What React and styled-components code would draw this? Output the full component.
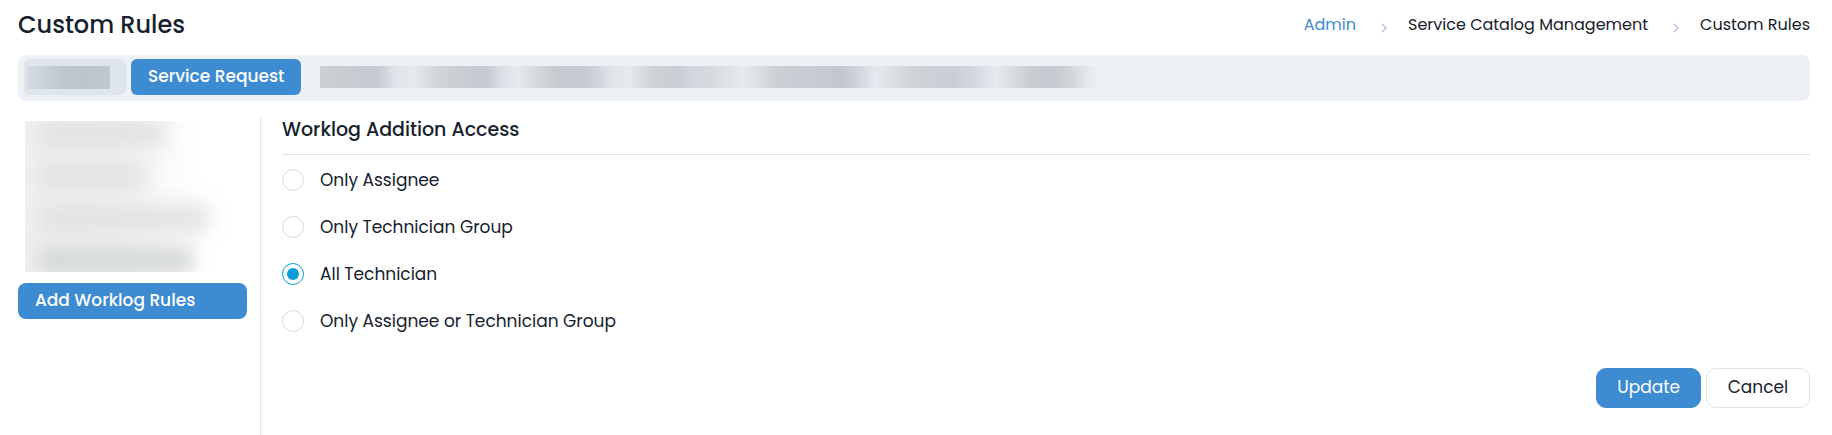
import { useState } from 'react';
import styled, { createGlobalStyle, css } from 'styled-components';

const GlobalStyle = createGlobalStyle`
  *, *::before, *::after {
    box-sizing: border-box;
  }

  body {
    margin: 0;
    background: #fff;
    color: #16212c;
    font-family: Poppins, Inter, sans-serif;
    font-size: 17px;
    line-height: 24px;
  }
`;

const Page = styled.div`
  min-height: 100vh;
  display: flex;
  flex-direction: column;
  padding: 0 22px 0 18px;
`;

const Header = styled.header`
  display: flex;
  align-items: center;
  justify-content: space-between;
  height: 55px;
  padding-bottom: 6px;
`;

const Title = styled.h1`
  margin: 0;
  font-size: 24px;
  line-height: 32px;
  font-weight: 500;
`;

const Breadcrumb = styled.nav`
  display: flex;
  align-items: center;
  gap: 20px;
  font-size: 16px;
`;

const CrumbLink = styled.a`
  color: #3d8bd1;
  text-decoration: none;
`;

const Chevron = styled.svg`
  width: 12px;
  height: 12px;
  margin-top: 6px;
  fill: none;
  stroke: #b4c3d6;
  stroke-width: 1.4;
`;

const TabBar = styled.div`
  display: flex;
  align-items: center;
  gap: 5px;
  height: 46px;
  padding: 0 6px 2px;
  border-radius: 8px;
  background: #edf0f5;
`;

const Tab = styled.button`
  height: 36px;
  padding: 0 17px 2px;
  border: 0;
  border-radius: 6px;
  background: #3d8bd1;
  color: #fff;
  font: inherit;
  font-weight: 500;
  cursor: pointer;
`;

const MutedTab = styled.div`
  display: flex;
  align-items: center;
  width: 102px;
  height: 36px;
  padding-left: 3px;
  border-radius: 6px;
  background: #dfe5ed;
`;

const HiddenLabel = styled.div`
  width: 83px;
  height: 23px;
  background: linear-gradient(90deg, #d5dce4, #c9d0d9 24%, #bfc6cf 42%, #bcc4cd 70%, #bfc7d0);
`;

const HiddenTabs = styled.div`
  width: 780px;
  height: 22px;
  margin-left: 14px;
  background: linear-gradient(
    90deg,
    #cdd1d3 0,
    #c7ccd2 30px,
    #c6cad4 58px,
    #e0e5ea 76px,
    #e6eaef 92px,
    #d0d5d7 118px,
    #cacfd2 136px,
    #c4c8d2 166px,
    #dde2e8 184px,
    #e6eaef 198px,
    #d4d9dc 216px,
    #c6cbd1 236px,
    #c6cad2 268px,
    #dfe5ea 292px,
    #e6eaef 308px,
    #ced4d6 332px,
    #c9cdd6 356px,
    #d1d7e0 376px,
    #d5dadc 390px,
    #e1e5e9 412px,
    #e7ebf0 424px,
    #cbd0d2 458px,
    #c8ccd6 486px,
    #c2c6d0 522px,
    #cdd2dd 536px,
    #e6eaef 556px,
    #ced3d6 594px,
    #c9ced8 634px,
    #d1d6e1 652px,
    #e6eaef 676px,
    #c8cdcf 712px,
    #c6cad4 732px,
    #cfd3d5 748px,
    #e5e9ed 768px,
    #edf0f5 780px
  );
`;

const Content = styled.div`
  flex: 1;
  display: flex;
  padding-top: 15px;
`;

const Sidebar = styled.aside`
  flex: 0 0 243px;
  padding: 5px 13px 0 0;
  border-right: 1px solid #e4e6e9;
`;

const HiddenMenu = styled.div`
  width: 203px;
  height: 151px;
  margin-left: 7px;
  padding-left: 12px;
  overflow: hidden;
  background: linear-gradient(90deg, #f0f1f1, #f2f3f3 45%, #fff 88%);
`;

const HiddenItem = styled.div`
  width: ${({ $width }) => $width}px;
  height: 26px;
  margin-bottom: 16px;
  background: ${({ $dark }) => ($dark ? '#d3d6d7' : '#dfe1e3')};
  filter: blur(10px);
`;

const MenuButton = styled.button`
  display: block;
  width: 100%;
  height: 36px;
  margin-top: 11px;
  padding: 0 17px 2px;
  border: 0;
  border-radius: 8px;
  background: #3d8bd1;
  color: #fff;
  font: inherit;
  font-weight: 500;
  text-align: left;
  cursor: pointer;
`;

const Main = styled.main`
  flex: 1;
  padding-left: 21px;
`;

const SectionTitle = styled.h2`
  margin: 0;
  padding: 2px 0 12px;
  border-bottom: 1px solid #e0e4ea;
  font-size: 19px;
  line-height: 24px;
  font-weight: 500;
`;

const Options = styled.fieldset`
  display: flex;
  flex-direction: column;
  align-items: flex-start;
  gap: 23px;
  margin: 0;
  padding: 13px 0 0;
  border: 0;
`;

const Option = styled.label`
  display: flex;
  align-items: center;
  gap: 16px;
  cursor: pointer;
`;

const Radio = styled.input`
  appearance: none;
  display: grid;
  place-items: center;
  width: 22px;
  height: 22px;
  margin: 0;
  border: 1px solid #d9d9d9;
  border-radius: 50%;

  &:checked {
    border-color: #099dd9;
  }

  &:checked::before {
    content: '';
    width: 12px;
    height: 12px;
    border-radius: 50%;
    background: #099dd9;
  }
`;

const Actions = styled.div`
  display: flex;
  justify-content: flex-end;
  gap: 5px;
  margin-top: 35px;
`;

const Button = styled.button`
  min-width: 104px;
  height: 40px;
  padding: 0 20px 2px;
  border: 1px solid #dfe5ee;
  border-radius: 10px;
  background: #fff;
  color: inherit;
  font: inherit;
  cursor: pointer;

  ${({ $primary }) =>
    $primary &&
    css`
      border-color: #3d8bd1;
      background: #3d8bd1;
      color: #fff;
    `}
`;

const accessOptions = [
  'Only Assignee',
  'Only Technician Group',
  'All Technician',
  'Only Assignee or Technician Group',
];

const Separator = () => (
  <Chevron viewBox="0 0 12 12" aria-hidden="true">
    <path d="M6 2 L10 6 L6 10" />
  </Chevron>
);

const App = () => {
  const [access, setAccess] = useState('All Technician');

  return (
    <>
      <GlobalStyle />
      <Page>
        <Header>
          <Title>Custom Rules</Title>
          <Breadcrumb>
            <CrumbLink href="#admin">Admin</CrumbLink>
            <Separator />
            <span>Service Catalog Management</span>
            <Separator />
            <span>Custom Rules</span>
          </Breadcrumb>
        </Header>

        <TabBar>
          <MutedTab>
            <HiddenLabel />
          </MutedTab>
          <Tab type="button">Service Request</Tab>
          <HiddenTabs />
        </TabBar>

        <Content>
          <Sidebar>
            <HiddenMenu>
              <HiddenItem $width={128} />
              <HiddenItem $width={108} />
              <HiddenItem $width={172} />
              <HiddenItem $width={156} $dark />
            </HiddenMenu>
            <MenuButton type="button">Add Worklog Rules</MenuButton>
          </Sidebar>

          <Main>
            <SectionTitle id="access-title">Worklog Addition Access</SectionTitle>
            <Options aria-labelledby="access-title">
              {accessOptions.map((option) => (
                <Option key={option}>
                  <Radio
                    type="radio"
                    name="access"
                    value={option}
                    checked={access === option}
                    onChange={() => setAccess(option)}
                  />
                  {option}
                </Option>
              ))}
            </Options>
            <Actions>
              <Button type="button" $primary>Update</Button>
              <Button type="button">Cancel</Button>
            </Actions>
          </Main>
        </Content>
      </Page>
    </>
  );
};

export default App;
